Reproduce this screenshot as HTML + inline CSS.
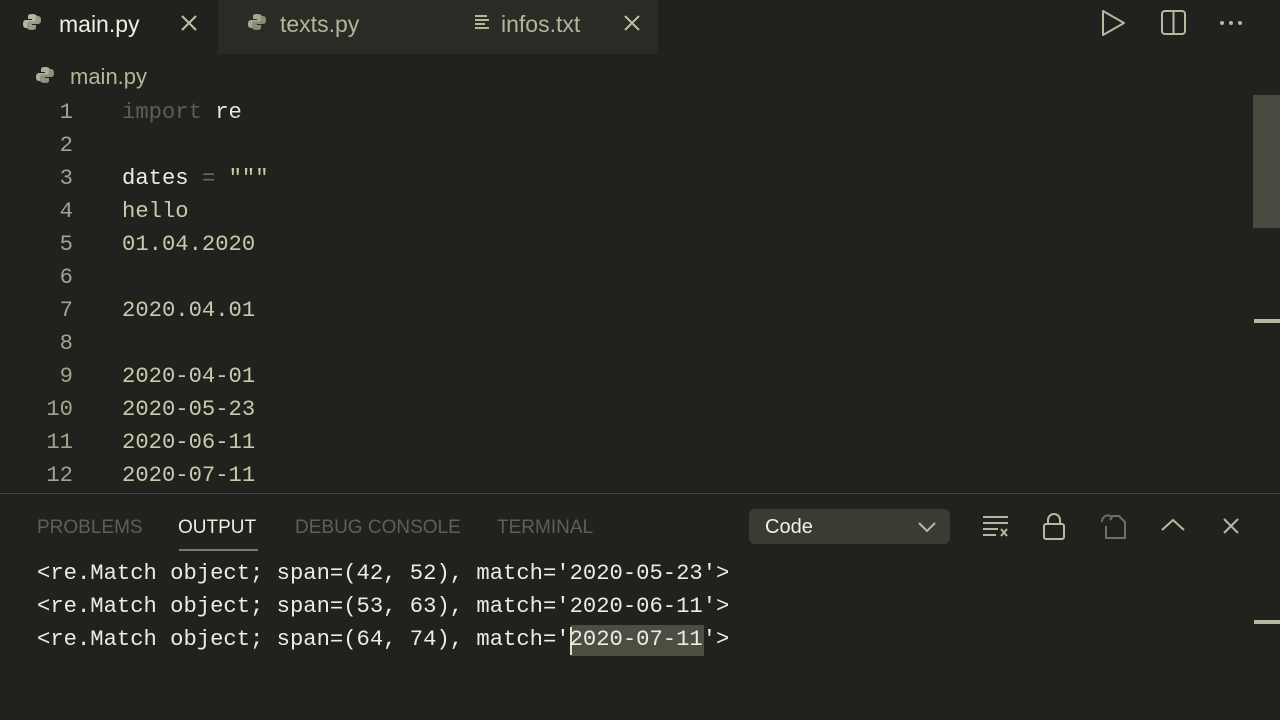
<!DOCTYPE html>
<html><head><style>
*{margin:0;padding:0;box-sizing:border-box}
body{width:1280px;height:720px;background:#21221d;overflow:hidden;position:relative;font-family:"Liberation Sans",sans-serif}
.a{position:absolute;white-space:pre}
.mono{font-family:"Liberation Mono",monospace;font-size:22.2px}
.tab{position:absolute;top:0;height:54px;background:#2a2b25}
.ln{color:#a3a390;text-align:right;width:52px;left:21px}
.s{color:#c9c9ad}
</style></head><body>
<div class="tab" style="left:218px;width:440px"></div>
<svg class="a" style="left:22px;top:12px" width="20" height="20" viewBox="0 0 20 20"><path d="M10 2c-4 0-4 1.5-4 3v2h4v1H4c-2 0-3 1.5-3 4s1 4 3 4h2v-3c0-1.5 1-2.5 2.5-2.5h4c1.5 0 2.5-1 2.5-2.5V5c0-1.5-1-3-5-3z" fill="#b8b8a0"/><path d="M10 18c4 0 4-1.5 4-3v-2h-4v-1h6c2 0 3-1.5 3-4s-1-4-3-4h-2v3c0 1.5-1 2.5-2.5 2.5h-4C6 9.5 5 10.5 5 12v3c0 1.5 1 3 5 3z" fill="#9a9a85"/></svg>
<div class="a" style="left:59px;top:11px;font-size:23px;color:#f0f0e2">main.py</div>
<svg class="a" style="left:180px;top:14px" width="18" height="18"><path d="M2 2L16 16M16 2L2 16" stroke="#c0c0a8" stroke-width="2"/></svg>
<svg class="a" style="left:247px;top:12px" width="20" height="20" viewBox="0 0 20 20"><path d="M10 2c-4 0-4 1.5-4 3v2h4v1H4c-2 0-3 1.5-3 4s1 4 3 4h2v-3c0-1.5 1-2.5 2.5-2.5h4c1.5 0 2.5-1 2.5-2.5V5c0-1.5-1-3-5-3z" fill="#a8a892"/><path d="M10 18c4 0 4-1.5 4-3v-2h-4v-1h6c2 0 3-1.5 3-4s-1-4-3-4h-2v3c0 1.5-1 2.5-2.5 2.5h-4C6 9.5 5 10.5 5 12v3c0 1.5 1 3 5 3z" fill="#8a8a76"/></svg>
<div class="a" style="left:280px;top:11px;font-size:23px;color:#b5b59c">texts.py</div>
<svg class="a" style="left:475px;top:15px" width="14" height="14"><path d="M0 1h12M0 5h14M0 9h10M0 13h14" stroke="#b5b59c" stroke-width="2"/></svg>
<div class="a" style="left:501px;top:11px;font-size:23px;color:#b5b59c">infos.txt</div>
<svg class="a" style="left:623px;top:14px" width="18" height="18"><path d="M2 2L16 16M16 2L2 16" stroke="#c0c0a8" stroke-width="2"/></svg>
<svg class="a" style="left:1100px;top:9px" width="28" height="28"><path d="M3 2L24 14L3 26Z" fill="none" stroke="#b8b8a0" stroke-width="2" stroke-linejoin="round"/></svg>
<svg class="a" style="left:1160px;top:9px" width="28" height="28"><rect x="2" y="2" width="23" height="23" rx="3" fill="none" stroke="#b8b8a0" stroke-width="2"/><path d="M13.5 2V25" stroke="#b8b8a0" stroke-width="2"/></svg>
<svg class="a" style="left:1218px;top:19px" width="28" height="8"><circle cx="4" cy="4" r="2" fill="#b8b8a0"/><circle cx="13" cy="4" r="2" fill="#b8b8a0"/><circle cx="22" cy="4" r="2" fill="#b8b8a0"/></svg>
<svg class="a" style="left:35px;top:65px" width="20" height="20" viewBox="0 0 20 20"><path d="M10 2c-4 0-4 1.5-4 3v2h4v1H4c-2 0-3 1.5-3 4s1 4 3 4h2v-3c0-1.5 1-2.5 2.5-2.5h4c1.5 0 2.5-1 2.5-2.5V5c0-1.5-1-3-5-3z" fill="#b0b098"/><path d="M10 18c4 0 4-1.5 4-3v-2h-4v-1h6c2 0 3-1.5 3-4s-1-4-3-4h-2v3c0 1.5-1 2.5-2.5 2.5h-4C6 9.5 5 10.5 5 12v3c0 1.5 1 3 5 3z" fill="#909080"/></svg>
<div class="a" style="left:70px;top:64px;font-size:22px;color:#b5b59c">main.py</div>

<div class="a mono ln" style="top:100px">1</div><div class="a mono" style="left:122px;top:100px"><span style="color:#5d5d50">import</span> <span style="color:#e6e6d6">re</span></div>
<div class="a mono ln" style="top:133px">2</div>
<div class="a mono ln" style="top:166px">3</div><div class="a mono" style="left:122px;top:166px"><span style="color:#eeeedd">dates</span> <span style="color:#6a6a5a">=</span> <span class="s">"""</span></div>
<div class="a mono ln" style="top:199px">4</div><div class="a mono s" style="left:122px;top:199px">hello</div>
<div class="a mono ln" style="top:232px">5</div><div class="a mono s" style="left:122px;top:232px">01.04.2020</div>
<div class="a mono ln" style="top:265px">6</div>
<div class="a mono ln" style="top:298px">7</div><div class="a mono s" style="left:122px;top:298px">2020.04.01</div>
<div class="a mono ln" style="top:331px">8</div>
<div class="a mono ln" style="top:364px">9</div><div class="a mono s" style="left:122px;top:364px">2020-04-01</div>
<div class="a mono ln" style="top:397px">10</div><div class="a mono s" style="left:122px;top:397px">2020-05-23</div>
<div class="a mono ln" style="top:430px">11</div><div class="a mono s" style="left:122px;top:430px">2020-06-11</div>
<div class="a mono ln" style="top:463px">12</div><div class="a mono s" style="left:122px;top:463px">2020-07-11</div>

<div class="a" style="left:1253px;top:95px;width:27px;height:133px;background:#4a4a40"></div>
<div class="a" style="left:1254px;top:319px;width:26px;height:4px;background:#b8b8a0"></div>

<div class="a" style="left:0;top:493px;width:1280px;height:227px;background:#21221d;border-top:1px solid #45463e"></div>
<div class="a" style="left:37px;top:517px;font-size:19px;color:#5f5f52">PROBLEMS</div>
<div class="a" style="left:178px;top:517px;font-size:19px;color:#eeeedd">OUTPUT</div>
<div class="a" style="left:179px;top:549px;width:79px;height:2px;background:#7a7a68"></div>
<div class="a" style="left:295px;top:517px;font-size:19px;color:#5f5f52">DEBUG CONSOLE</div>
<div class="a" style="left:497px;top:517px;font-size:19px;color:#5f5f52">TERMINAL</div>
<div class="a" style="left:749px;top:509px;width:201px;height:35px;background:#3a3b33;border-radius:6px"></div>
<div class="a" style="left:765px;top:516px;font-size:20px;color:#f2f2e4">Code</div>
<svg class="a" style="left:917px;top:520px" width="20" height="14"><path d="M2 3L10 11L18 3" fill="none" stroke="#b8b8a0" stroke-width="2"/></svg>
<svg class="a" style="left:982px;top:515px" width="28" height="24"><path d="M1 2h25M1 8h25M1 14h15M1 20h13" stroke="#b8b8a0" stroke-width="2"/><path d="M19 14l6 7M25 14l-6 7" stroke="#b8b8a0" stroke-width="2"/></svg>
<svg class="a" style="left:1042px;top:512px" width="24" height="28"><rect x="2" y="12" width="20" height="15" rx="2" fill="none" stroke="#b8b8a0" stroke-width="2"/><path d="M6 12V8a6 6 0 0 1 12 0v4" fill="none" stroke="#b8b8a0" stroke-width="2"/></svg>
<svg class="a" style="left:1098px;top:512px" width="30" height="28"><path d="M8 14V26h19V10l-6-6h-7" fill="none" stroke="#70705e" stroke-width="2"/><path d="M4 10a6 6 0 0 1 10-5l-2 3" fill="none" stroke="#70705e" stroke-width="2"/></svg>
<svg class="a" style="left:1160px;top:517px" width="26" height="16"><path d="M2 13L13 3L24 13" fill="none" stroke="#b8b8a0" stroke-width="2"/></svg>
<svg class="a" style="left:1222px;top:517px" width="18" height="18"><path d="M2 2L16 16M16 2L2 16" stroke="#b8b8a0" stroke-width="2"/></svg>

<div class="a" style="left:571px;top:625px;width:133px;height:31px;background:#4d4d42"></div>
<div class="a" style="left:570px;top:627px;width:2px;height:28px;background:#e0e0d0"></div>
<div class="a mono" style="left:37px;top:561px;color:#ecece0">&lt;re.Match object; span=(42, 52), match='2020-05-23'&gt;</div>
<div class="a mono" style="left:37px;top:594px;color:#ecece0">&lt;re.Match object; span=(53, 63), match='2020-06-11'&gt;</div>
<div class="a mono" style="left:37px;top:627px;color:#ecece0">&lt;re.Match object; span=(64, 74), match='2020-07-11'&gt;</div>
<div class="a" style="left:1254px;top:620px;width:26px;height:4px;background:#b8b8a0"></div>
</body></html>
